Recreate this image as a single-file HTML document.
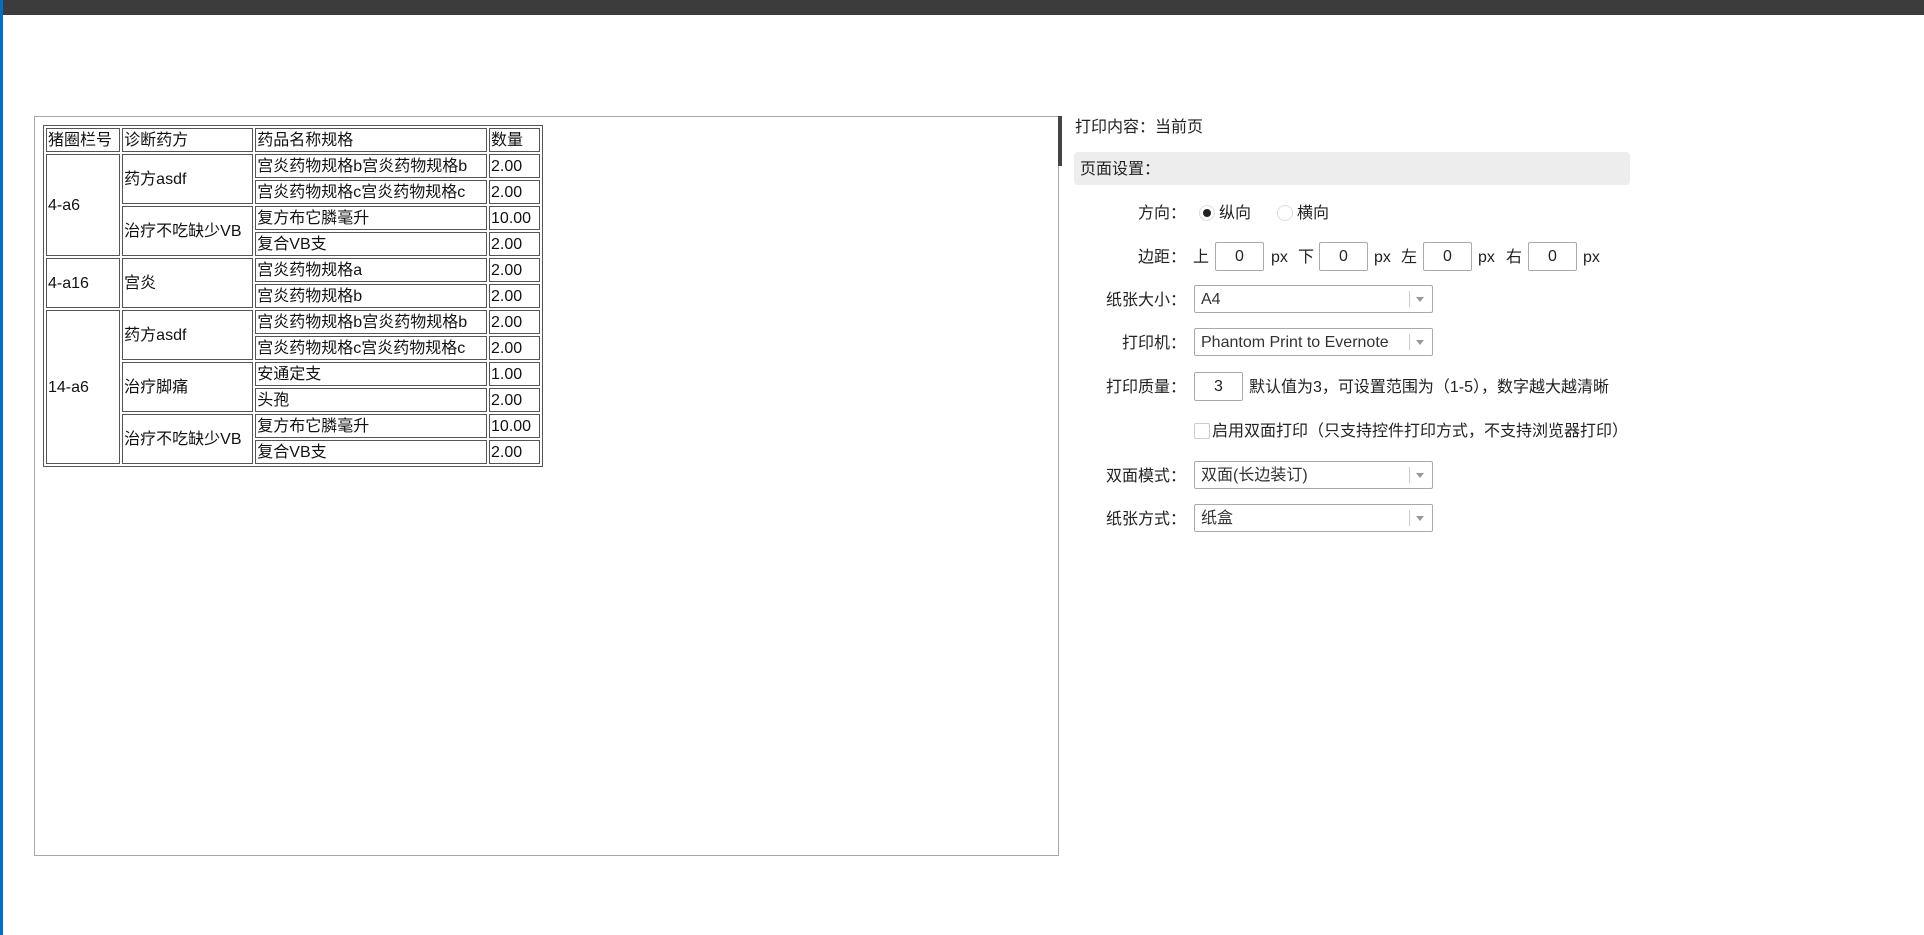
<!DOCTYPE html>
<html><head><meta charset="utf-8"><style>
*{box-sizing:border-box}
body{margin:0;width:1924px;height:935px;background:#fff;position:relative;overflow:hidden;font-family:"Liberation Sans","Noto Sans CJK SC",sans-serif;color:#222}
.top{position:absolute;left:0;top:0;width:1924px;height:15px;background:#3c3c3c}
.blue{position:absolute;left:0;top:0;width:3px;height:935px;background:#0e6bb5}
.panel{position:absolute;left:34px;top:116px;width:1025px;height:740px;border:1px solid #a8a8a8}
.bar{position:absolute;left:1058px;top:116px;width:4px;height:50px;background:#444}
table{position:absolute;left:43px;top:125px;width:500px;border:1px solid #555;border-spacing:2px;font-size:16px;border-collapse:separate;color:#111}
td{border:1px solid #555;height:24px;padding:1px 1px 0;line-height:20px;white-space:nowrap;vertical-align:middle}
.r{position:absolute;font-size:16px;color:#222;line-height:20px;white-space:nowrap}
.gray{position:absolute;left:1074px;top:152px;width:556px;height:33px;background:#ededed;border-radius:4px;font-size:16px;line-height:35px;padding-left:6px}
.inp{position:absolute;border:1px solid #aaa;border-radius:2px;background:#fff;font-size:16px;text-align:center;line-height:28px}
.sel{position:absolute;left:1194px;width:239px;height:28px;border:1px solid #aaa;border-radius:2px;font-size:16px;line-height:28px;padding-left:6px;color:#333}
.sel:after{content:"";position:absolute;right:0;top:5px;width:22px;height:16px;border-left:1px solid #ccc}
.sel i{position:absolute;right:8px;top:11px;border-left:4px solid transparent;border-right:4px solid transparent;border-top:5px solid #999}
.lab{position:absolute;font-size:16px;text-align:right;width:150px;left:1036px;line-height:20px}
</style></head><body>
<div class="top"></div><div class="blue"></div>
<div class="panel"></div><div class="bar"></div>
<table>
<colgroup><col style="width:76px"><col style="width:134px"><col style="width:237px"><col style="width:53px"></colgroup>
<tr><td>猪圈栏号</td><td>诊断药方</td><td>药品名称规格</td><td>数量</td></tr>
<tr><td rowspan="4">4-a6</td><td rowspan="2">药方asdf</td><td>宫炎药物规格b宫炎药物规格b</td><td>2.00</td></tr>
<tr><td>宫炎药物规格c宫炎药物规格c</td><td>2.00</td></tr>
<tr><td rowspan="2">治疗不吃缺少VB</td><td>复方布它膦毫升</td><td>10.00</td></tr>
<tr><td>复合VB支</td><td>2.00</td></tr>
<tr><td rowspan="2">4-a16</td><td rowspan="2">宫炎</td><td>宫炎药物规格a</td><td>2.00</td></tr>
<tr><td>宫炎药物规格b</td><td>2.00</td></tr>
<tr><td rowspan="6">14-a6</td><td rowspan="2">药方asdf</td><td>宫炎药物规格b宫炎药物规格b</td><td>2.00</td></tr>
<tr><td>宫炎药物规格c宫炎药物规格c</td><td>2.00</td></tr>
<tr><td rowspan="2">治疗脚痛</td><td>安通定支</td><td>1.00</td></tr>
<tr><td>头孢</td><td>2.00</td></tr>
<tr><td rowspan="2">治疗不吃缺少VB</td><td>复方布它膦毫升</td><td>10.00</td></tr>
<tr><td>复合VB支</td><td>2.00</td></tr>
</table>

<div class="r" style="left:1075px;top:118px">打印内容：当前页</div>
<div class="gray">页面设置：</div>

<div class="lab" style="top:204px">方向：</div>
<div style="position:absolute;left:1199px;top:205px;width:16px;height:16px;border:1px solid #ddd;border-radius:50%"><div style="position:absolute;left:3px;top:3px;width:8px;height:8px;border-radius:50%;background:#222"></div></div>
<div class="r" style="left:1219px;top:204px">纵向</div>
<div style="position:absolute;left:1277px;top:205px;width:16px;height:16px;border:1px solid #ddd;border-radius:50%"></div>
<div class="r" style="left:1297px;top:204px">横向</div>

<div class="lab" style="top:248px">边距：</div>
<div class="r" style="left:1193px;top:248px">上</div>
<div class="inp" style="left:1215px;top:242px;width:49px;height:29px">0</div>
<div class="r" style="left:1271px;top:248px">px</div>
<div class="r" style="left:1298px;top:248px">下</div>
<div class="inp" style="left:1319px;top:242px;width:49px;height:29px">0</div>
<div class="r" style="left:1374px;top:248px">px</div>
<div class="r" style="left:1401px;top:248px">左</div>
<div class="inp" style="left:1423px;top:242px;width:49px;height:29px">0</div>
<div class="r" style="left:1478px;top:248px">px</div>
<div class="r" style="left:1506px;top:248px">右</div>
<div class="inp" style="left:1528px;top:242px;width:49px;height:29px">0</div>
<div class="r" style="left:1583px;top:248px">px</div>

<div class="lab" style="top:291px">纸张大小：</div>
<div class="sel" style="top:285px">A4<i></i></div>
<div class="lab" style="top:334px">打印机：</div>
<div class="sel" style="top:328px">Phantom Print to Evernote<i></i></div>
<div class="lab" style="top:378px">打印质量：</div>
<div class="inp" style="left:1194px;top:372px;width:49px;height:29px">3</div>
<div class="r" style="left:1249px;top:378px">默认值为3，可设置范围为（1-5），数字越大越清晰</div>
<div style="position:absolute;left:1194px;top:423px;width:16px;height:16px;border:1px solid #ccc;border-radius:2px"></div>
<div class="r" style="left:1212px;top:422px">启用双面打印（只支持控件打印方式，不支持浏览器打印）</div>
<div class="lab" style="top:467px">双面模式：</div>
<div class="sel" style="top:461px">双面(长边装订)<i></i></div>
<div class="lab" style="top:510px">纸张方式：</div>
<div class="sel" style="top:504px">纸盒<i></i></div>
</body></html>
